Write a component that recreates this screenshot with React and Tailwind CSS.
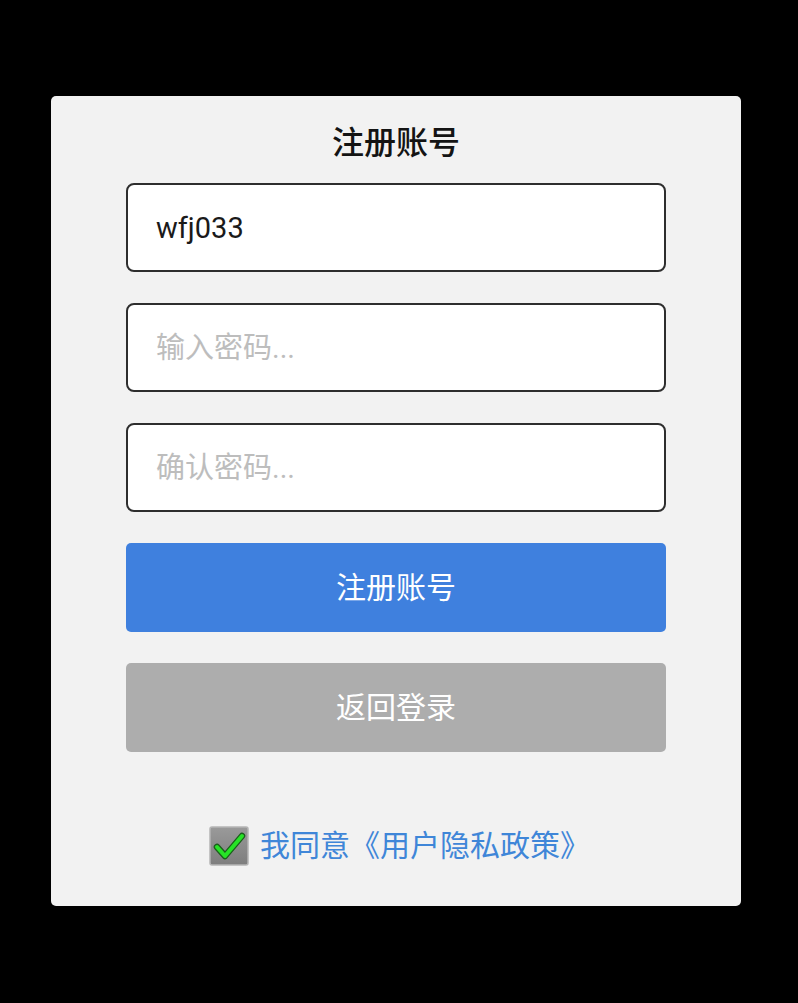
import { useState } from "react";

const fuente = {
  fontFamily: 'Roboto, "Noto Sans CJK SC", sans-serif',
};

function CasillaVerde() {
  // casilla gris con la marca verde, como en la captura
  return (
    <svg width="40" height="40" viewBox="0 0 40 40">
      <defs>
        <linearGradient id="fondoCasilla" x1="0" y1="0" x2="0" y2="1">
          <stop offset="0" stopColor="#9a9a9a" />
          <stop offset="1" stopColor="#7e7e7e" />
        </linearGradient>
      </defs>
      <rect x="1" y="1" width="38" height="38" rx="2" fill="url(#fondoCasilla)" stroke="#b5b5b5" strokeWidth="1.5" />
      <path d="M8 21 L16 30 L33 10" fill="none" stroke="#1b5e1b" strokeWidth="6.5" strokeLinecap="round" strokeLinejoin="round" />
      <path d="M8 21 L16 30 L33 10" fill="none" stroke="#27e327" strokeWidth="4" strokeLinecap="round" strokeLinejoin="round" />
    </svg>
  );
}

export default function App() {
  const [usuario, setUsuario] = useState("wfj033");
  const [clave, setClave] = useState("");
  const [confirmar, setConfirmar] = useState("");

  const claseInput =
    "w-full h-[89px] rounded-[8px] border-2 border-[#2e2e2e] bg-white pl-[28px] pr-4 text-[29px] text-[#1a1a1a] outline-none placeholder:text-[#bdbdbd]";

  return (
    <div className="min-h-[1003px] bg-black pt-[96px] pl-[51px]" style={fuente}>
      <div className="w-[690px] h-[810px] rounded-[5px] bg-[#f2f2f2] flex flex-col items-center pt-[27px]">
        <h1 className="text-[32px] leading-[40px] font-medium text-[#141414]">注册账号</h1>

        <div className="w-[540px] mt-[20px] flex flex-col gap-[31px]">
          <input
            className={claseInput}
            value={usuario}
            onChange={(e) => setUsuario(e.target.value)}
          />
          <input
            type="password"
            className={claseInput}
            placeholder="输入密码..."
            value={clave}
            onChange={(e) => setClave(e.target.value)}
          />
          <input
            type="password"
            className={claseInput}
            placeholder="确认密码..."
            value={confirmar}
            onChange={(e) => setConfirmar(e.target.value)}
          />
          <button className="h-[89px] w-full rounded-[5px] bg-[#3f80de] text-white text-[30px]">
            注册账号
          </button>
          <button className="h-[89px] w-full rounded-[5px] bg-[#adadad] text-white text-[30px]">
            返回登录
          </button>
        </div>

        <div className="mt-[74px] flex items-center gap-[11px] pl-[7px]">
          <CasillaVerde />
          <span className="text-[30px] leading-[40px] text-[#3f86d8]">我同意《用户隐私政策》</span>
        </div>
      </div>
    </div>
  );
}
